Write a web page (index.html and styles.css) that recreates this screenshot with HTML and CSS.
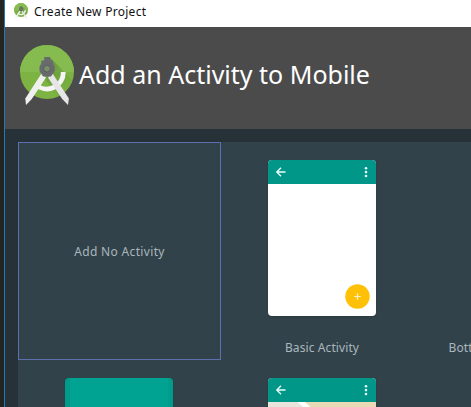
FILE: index.html
```html
<!DOCTYPE html>
<html lang="en">
<head>
<meta charset="utf-8">
<title>Create New Project</title>
<link rel="stylesheet" href="styles.css">
</head>
<body>
<svg class="defs" width="0" height="0" aria-hidden="true">
  <defs>
    <linearGradient id="shade" gradientUnits="userSpaceOnUse" x1="28" y1="18" x2="46" y2="44">
      <stop offset="0" stop-color="#4c7a2a" stop-opacity=".6"/>
      <stop offset="1" stop-color="#689f38" stop-opacity=".15"/>
    </linearGradient>
    <clipPath id="disc"><circle cx="27" cy="27" r="27"/></clipPath>
    <symbol id="studio" viewBox="0 0 54 61">
      <circle cx="27" cy="27" r="27" fill="#7cb342"/>
      <path d="M0 27a27 27 0 0 1 54 0z" fill="#86bb50"/>
      <path d="M30 12.500L58 41V60H42L24 32z" fill="url(#shade)" clip-path="url(#disc)"/>
      <path d="M15.500 39.500A16.500 16.500 0 0 0 43.300 27" fill="none" stroke="#f5f5f5" stroke-width="4.800"/>
      <path d="M21.500 28.500L26 32.500L11.800 54L6 60L5.300 53.500z" fill="#f0f0f0"/>
      <path d="M32.500 28.500L28 32.500L42.200 54L48 60L48.900 53.500z" fill="#e6e6e8"/>
      <path d="M24.200 12H30.200V15.500H33V18.500L34.700 21.500V26L31 31.500H23L19.500 26V21.500L21.300 18.500V15.500H24.200z" fill="#686a6e"/>
      <circle cx="27" cy="23.700" r="3.400" fill="#77906a" stroke="#58595d"/>
    </symbol>
    <symbol id="back" viewBox="0 0 12 12">
      <path d="M10.500 6H2M6 1.800L1.800 6L6 10.200" fill="none" stroke="#e8fffb" stroke-width="1.400"/>
    </symbol>
    <symbol id="more" viewBox="0 0 4 12">
      <circle cx="2" cy="2.200" r="1.300" fill="#e8fffb"/><circle cx="2" cy="6.100" r="1.300" fill="#e8fffb"/><circle cx="2" cy="10" r="1.300" fill="#e8fffb"/>
    </symbol>
  </defs>
</svg>
<div class="window">
  <div class="titlebar">
    <svg class="app-icon"><use href="#studio"/></svg>
    <span class="caption">Create New Project</span>
  </div>
  <header class="banner">
    <svg class="logo"><use href="#studio"/></svg>
    <h1>Add an Activity to Mobile</h1>
  </header>
  <main class="content">
    <div class="gallery">
      <div class="cell selected"><span>Add No Activity</span></div>
      <div class="cell">
        <div class="phone">
          <div class="bar"><svg class="back"><use href="#back"/></svg><svg class="more"><use href="#more"/></svg></div>
          <svg class="fab" viewBox="0 0 25 25"><circle cx="12.500" cy="12.500" r="12.200" fill="#ffc107"/><path d="M12.500 9.300V15.700M9.300 12.500H15.700" stroke="#fff3cd" stroke-width="1.200"/></svg>
        </div>
        <span class="label">Basic Activity</span>
      </div>
      <div class="cell"><div class="spacer"></div><span class="label">Bottom Navigation Activity</span></div>
      <div class="cell"><div class="phone full"></div></div>
      <div class="cell">
        <div class="phone">
          <div class="bar"><svg class="back"><use href="#back"/></svg><svg class="more"><use href="#more"/></svg></div>
          <svg class="map" viewBox="0 0 108 132"><rect width="108" height="132" fill="#e9dab5"/><path d="M0 0H32L70 50V132H0z" fill="#e9e5dc"/><path d="M30 -3L41 7L70 50" fill="none" stroke="#fff" stroke-width="5"/></svg>
        </div>
      </div>
    </div>
  </main>
</div>
</body>
</html>
```
FILE: styles.css
```css
* { box-sizing: border-box; }
body {
  margin: 0;
  height: 407px;
  overflow: hidden;
  background: #222522;
  font-family: "Noto Sans", "Open Sans", sans-serif;
}
.defs { position: absolute; }
.window {
  display: flex;
  flex-direction: column;
  height: 407px;
  margin-left: 4px;
  border-left: 1px solid #2578b5;
  overflow: hidden;
}
.titlebar {
  flex: 0 0 27px;
  display: flex;
  align-items: center;
  gap: 6px;
  padding: 0 0 4px 9px;
  background: #fff;
  color: #111;
  font-size: 12px;
}
.app-icon { width: 14px; height: 16px; margin-bottom: 1px; }
.caption { line-height: 16px; letter-spacing: 0.27px; }
.banner {
  flex: 0 0 102px;
  display: flex;
  align-items: flex-start;
  padding: 18px 0 0 15px;
  background: #4b4b4b;
}
.logo { flex: none; width: 54px; height: 61px; }
h1 {
  margin: 11px 0 0 5px;
  color: #fff;
  font-size: 25px;
  font-weight: 400;
  line-height: 36px;
  white-space: nowrap;
}
.content { flex: 1; padding: 13px 0 0 13px; background: #263238; overflow: hidden; }
.gallery {
  display: grid;
  grid-template-columns: repeat(3, 203px);
  grid-auto-rows: 218px;
  width: 609px;
  background: #32424a;
}
.cell {
  display: flex;
  flex-direction: column;
  align-items: center;
  padding: 18px 1px 0 0;
  color: #a9b7bd;
  font-size: 12px;
  letter-spacing: 0.1px;
  white-space: nowrap;
}
.selected {
  justify-content: center;
  padding: 1px 0 0;
  border: 1px solid #5c6fae;
  letter-spacing: 0.33px;
}
.phone {
  flex: none;
  display: flex;
  flex-direction: column;
  width: 108px;
  height: 156px;
  border-radius: 4px;
  background: #fff;
  overflow: hidden;
  box-shadow: 0 1px 2px #26323880;
}
.bar {
  flex: 0 0 24px;
  display: flex;
  justify-content: space-between;
  align-items: center;
  padding: 0 8px 0 7px;
  background: #009688;
}
.back { width: 12px; height: 12px; }
.more { width: 4px; height: 12px; }
.fab { width: 25px; height: 25px; margin: auto 6px 7px auto; }
.map { width: 108px; height: 132px; }
.full { background: #00a392; border: 5px solid #009c8b; border-top-width: 0; }
.spacer { flex: none; height: 156px; }
.label { margin-top: 23px; line-height: 18px; }
```
